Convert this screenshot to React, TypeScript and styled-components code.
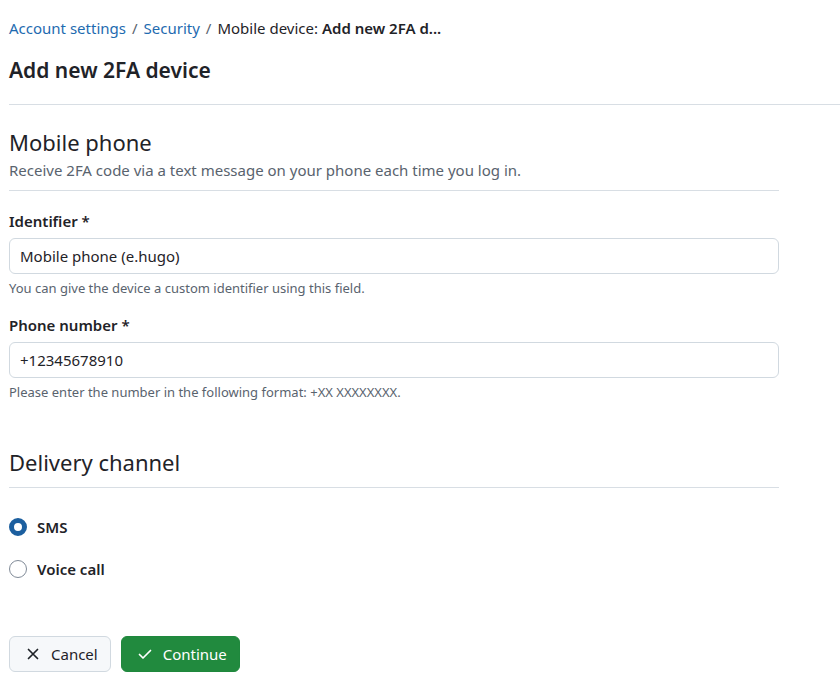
import React from "react";
import styled, { createGlobalStyle } from "styled-components";

const Global = createGlobalStyle`
  html, body { margin: 0; padding: 0; background: #ffffff; }
  body {
    font-family: "Noto Sans", "Open Sans", sans-serif;
    color: #1f2328;
    font-size: 15px;
  }
  * { box-sizing: border-box; }
`;

const Page = styled.div`
  padding: 18px 0 20px 9px;
  width: 840px;
`;

const Breadcrumb = styled.nav`
  display: flex;
  align-items: center;
  gap: 6px;
  font-size: 15px;
  line-height: 20px;
  height: 20px;
`;

const Crumb = styled.a`
  color: #1e6bb0;
  text-decoration: none;
`;

const Sep = styled.span`
  color: #59636e;
`;

const Current = styled.span`
  color: #1f2328;
  b { font-weight: 600; }
`;

const Title = styled.h1`
  margin: 18px 0 0;
  font-size: 21px;
  line-height: 28px;
  font-weight: 600;
`;

const TopRule = styled.hr`
  margin: 20px 0 0 0;
  border: 0;
  border-top: 1px solid #d8dee4;
`;

const Form = styled.form`
  width: 770px;
`;

const SectionHead = styled.div<{ $top: number }>`
  margin-top: ${(p) => p.$top}px;
  padding-bottom: 10px;
  border-bottom: 1px solid #d8dee4;
`;

const SectionTitle = styled.h2`
  margin: 0;
  font-size: 22px;
  line-height: 30px;
  font-weight: 400;
`;

const SectionDesc = styled.p`
  margin: 3px 0 0;
  font-size: 15px;
  line-height: 20px;
  color: #59636e;
`;

const Field = styled.div<{ $top: number }>`
  margin-top: ${(p) => p.$top}px;
  display: flex;
  flex-direction: column;
`;

const Label = styled.label`
  font-weight: 600;
  font-size: 15px;
  line-height: 20px;
`;

const Input = styled.input`
  margin-top: 7px;
  height: 36px;
  width: 100%;
  border: 1px solid #d1d9e0;
  border-radius: 6px;
  padding: 0 10px;
  font: inherit;
  font-size: 15px;
  color: #1f2328;
  background: #fff;
  outline: none;
`;

const Help = styled.div`
  margin-top: 5px;
  font-size: 13px;
  line-height: 18px;
  color: #59636e;
`;

const Options = styled.div`
  margin-top: 28px;
  display: flex;
  flex-direction: column;
  gap: 20px;
`;

const Option = styled.label`
  display: flex;
  align-items: center;
  gap: 10px;
  font-weight: 600;
  font-size: 15px;
  line-height: 22px;
  cursor: pointer;
`;

const Radio = styled.span<{ $checked?: boolean }>`
  width: 18px;
  height: 18px;
  border-radius: 50%;
  flex: none;
  border: ${(p) => (p.$checked ? "5px solid #1c5f9f" : "1px solid #818b98")};
  background: #fff;
`;

const Actions = styled.div`
  margin-top: 56px;
  display: flex;
  gap: 10px;
`;

const Button = styled.button<{ $primary?: boolean }>`
  height: 36px;
  display: inline-flex;
  align-items: center;
  gap: 10px;
  padding: 0 12px 0 15px;
  border-radius: 6px;
  font: inherit;
  font-size: 15px;
  cursor: pointer;
  border: 1px solid ${(p) => (p.$primary ? "#1f883d" : "#d1d9e0")};
  background: ${(p) => (p.$primary ? "#218a3e" : "#f6f8fa")};
  color: ${(p) => (p.$primary ? "#ffffff" : "#1f2328")};
`;

const XIcon = () => (
  <svg width="16" height="16" viewBox="0 0 16 16" fill="none">
    <path d="M3.5 3.5l9 9M12.5 3.5l-9 9" stroke="currentColor" strokeWidth="1.7" strokeLinecap="round" />
  </svg>
);

const CheckIcon = () => (
  <svg width="16" height="16" viewBox="0 0 16 16" fill="none">
    <path d="M2.5 8.5l3.5 3.5 7.5-7.5" stroke="currentColor" strokeWidth="1.7" strokeLinecap="round" strokeLinejoin="round" />
  </svg>
);

export default function App() {
  return (
    <>
      <Global />
      <Page>
        <Breadcrumb>
          <Crumb href="#">Account settings</Crumb>
          <Sep>/</Sep>
          <Crumb href="#">Security</Crumb>
          <Sep>/</Sep>
          <Current>
            Mobile device: <b>Add new 2FA d...</b>
          </Current>
        </Breadcrumb>
        <Title>Add new 2FA device</Title>
        <TopRule />
        <Form>
          <SectionHead $top={22}>
            <SectionTitle>Mobile phone</SectionTitle>
            <SectionDesc>Receive 2FA code via a text message on your phone each time you log in.</SectionDesc>
          </SectionHead>
          <Field $top={20}>
            <Label>Identifier *</Label>
            <Input defaultValue="Mobile phone (e.hugo)" />
            <Help>You can give the device a custom identifier using this field.</Help>
          </Field>
          <Field $top={18}>
            <Label>Phone number *</Label>
            <Input defaultValue="+12345678910" />
            <Help>Please enter the number in the following format: +XX XXXXXXXX.</Help>
          </Field>
          <SectionHead $top={46}>
            <SectionTitle>Delivery channel</SectionTitle>
          </SectionHead>
          <Options>
            <Option>
              <Radio $checked />
              SMS
            </Option>
            <Option>
              <Radio />
              Voice call
            </Option>
          </Options>
          <Actions>
            <Button type="button">
              <XIcon />
              Cancel
            </Button>
            <Button type="button" $primary>
              <CheckIcon />
              Continue
            </Button>
          </Actions>
        </Form>
      </Page>
    </>
  );
}
